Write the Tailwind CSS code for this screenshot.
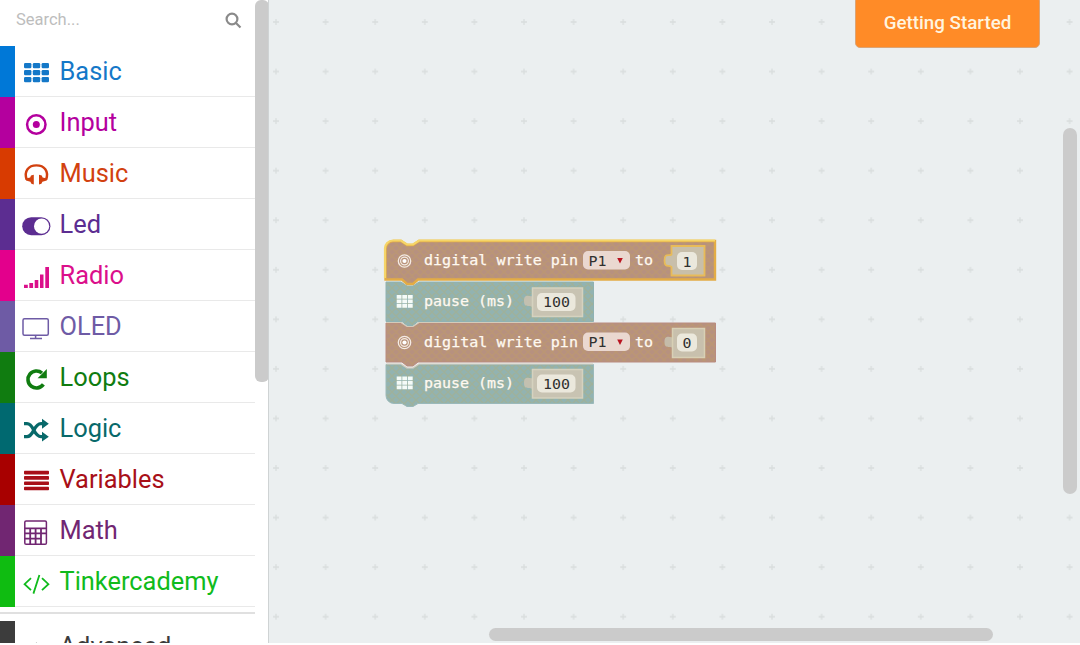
<!DOCTYPE html>
<html lang="en">
<head>
<meta charset="utf-8">
<title>Block editor</title>
<script src="https://cdn.jsdelivr.net/npm/@tailwindcss/browser@4"></script>
</head>
<body class="h-[645px] w-[1080px] overflow-hidden bg-white font-['Roboto',sans-serif]">
<div class="flex h-[643px] w-full overflow-hidden">
  <aside class="relative h-full w-[269px] shrink-0 overflow-hidden border-r border-[#cfd3d4] bg-white">
    <div class="flex h-[46px] w-[255px] items-start justify-between pt-[10px] pr-[13px] pl-4">
      <span class="text-[16.5px] leading-[19px] text-[#bdbdbd]">Search...</span>
      <svg class="mt-[2px] h-[17px] w-[17px]" viewBox="0 0 17 17" fill="none" stroke="#8a8a8a" stroke-width="2.2"><circle cx="7" cy="7" r="5.4"/><path d="M11 11l4.5 4.5"/></svg>
    </div>
    <nav class="flex w-[255px] flex-col text-[25.4px] leading-[50px]">
      <div class="flex h-[51px] text-[#1478c8]"><div class="w-[15px] bg-[#0078d7]"></div><div class="flex flex-1 border-b border-[#e9e9e9]"><svg class="mt-[1px] h-[50px] w-[44.5px] shrink-0" viewBox="0 0 44.5 50" fill="currentColor"><g><rect x="9" y="16" width="7.4" height="5.3" rx="1.3"/><rect x="17.8" y="16" width="7.4" height="5.3" rx="1.3"/><rect x="26.6" y="16" width="7.4" height="5.3" rx="1.3"/><rect x="9" y="23" width="7.4" height="5.3" rx="1.3"/><rect x="17.8" y="23" width="7.4" height="5.3" rx="1.3"/><rect x="26.6" y="23" width="7.4" height="5.3" rx="1.3"/><rect x="9" y="30" width="7.4" height="5.3" rx="1.3"/><rect x="17.8" y="30" width="7.4" height="5.3" rx="1.3"/><rect x="26.6" y="30" width="7.4" height="5.3" rx="1.3"/></g></svg><span>Basic</span></div></div>
      <div class="flex h-[51px] text-[#b4009e]"><div class="w-[15px] bg-[#b4009e]"></div><div class="flex flex-1 border-b border-[#e9e9e9]"><svg class="mt-[1px] h-[50px] w-[44.5px] shrink-0" viewBox="0 0 44.5 50"><circle cx="21.3" cy="26.5" r="9.2" fill="none" stroke="currentColor" stroke-width="2.5"/><circle cx="21.3" cy="26.5" r="3.5" fill="currentColor"/></svg><span>Input</span></div></div>
      <div class="flex h-[51px] text-[#d2410f]"><div class="w-[15px] bg-[#d83b01]"></div><div class="flex flex-1 border-b border-[#e9e9e9]"><svg class="mt-[1px] h-[50px] w-[44.5px] shrink-0" viewBox="0 0 44.500 50"><path d="M11.600 30.500C8.800 22 13.500 16.400 21.400 16.400S34 22 31.200 30.500" fill="none" stroke="currentColor" stroke-width="2.4"/><path d="M18.800 25.800V35.400L16.400 34.800 15.400 32.800 11 31.600 10.800 29.400 15.200 28.600 16 26.400ZM24 25.800V35.400L26.400 34.800 27.400 32.800 31.800 31.600 32 29.400 27.600 28.600 26.800 26.400Z" fill="currentColor"/></svg><span>Music</span></div></div>
      <div class="flex h-[51px] text-[#5c2d91]"><div class="w-[15px] bg-[#5c2d91]"></div><div class="flex flex-1 border-b border-[#e9e9e9]"><svg class="mt-[1px] h-[50px] w-[44.5px] shrink-0" viewBox="0 0 44.5 50"><rect x="7.2" y="17.2" width="28.2" height="18" rx="9" fill="currentColor"/><circle cx="26.6" cy="26.2" r="7.6" fill="white"/></svg><span>Led</span></div></div>
      <div class="flex h-[51px] text-[#db0f8b]"><div class="w-[15px] bg-[#e3008c]"></div><div class="flex flex-1 border-b border-[#e9e9e9]"><svg class="mt-[1px] h-[50px] w-[44.5px] shrink-0" viewBox="0 0 44.5 50" fill="currentColor"><path d="M9 33.7h3.8v3.3H9zM14.3 32h3.8v5h-3.8zM19.7 29h3.6v8h-3.6zM25 23.6h3.5V37H25zM30.3 16H34v21h-3.7z"/></svg><span>Radio</span></div></div>
      <div class="flex h-[51px] text-[#6e5ba5]"><div class="w-[15px] bg-[#6e5ba5]"></div><div class="flex flex-1 border-b border-[#e9e9e9]"><svg class="h-[50px] w-[44.5px] shrink-0" viewBox="0 0 44.5 50" fill="none" stroke="currentColor" stroke-width="1.5"><rect x="8" y="17.7" width="25.3" height="16.6" rx="1.5"/><path d="M20.6 34.3V38M15 37.6h12"/></svg><span>OLED</span></div></div>
      <div class="flex h-[51px] text-[#107c10]"><div class="w-[15px] bg-[#107c10]"></div><div class="flex flex-1 border-b border-[#e9e9e9]"><svg class="h-[50px] w-[44.5px] shrink-0" viewBox="0 0 44.5 50"><path d="M28.4 32.4A8.5 8.5 0 1 1 27 21" fill="none" stroke="currentColor" stroke-width="3.6"/><path d="M31.8 17V26.200H22.600Z" fill="currentColor"/></svg><span>Loops</span></div></div>
      <div class="flex h-[51px] text-[#08696a]"><div class="w-[15px] bg-[#006970]"></div><div class="flex flex-1 border-b border-[#e9e9e9]"><svg class="h-[50px] w-[44.5px] shrink-0" viewBox="0 0 44.5 50"><path d="M9 20.700h3c7 0 6.500 13 14 13h2M9 33.700h3c7 0 6.500-13 14-13h2" fill="none" stroke="currentColor" stroke-width="3.300"/><path d="M27 15.800l6.800 4.900-6.800 5zM27 28.700l6.800 5-6.800 4.800z" fill="currentColor"/></svg><span>Logic</span></div></div>
      <div class="flex h-[51px] text-[#a80f18]"><div class="w-[15px] bg-[#a80000]"></div><div class="flex flex-1 border-b border-[#e9e9e9]"><svg class="mt-[1px] h-[50px] w-[44.5px] shrink-0" viewBox="0 0 44.5 50" fill="currentColor"><rect x="9" y="15.8" width="25" height="3.6" rx=".8"/><rect x="9" y="21.1" width="25" height="3.6" rx=".8"/><rect x="9" y="26.4" width="25" height="3.6" rx=".8"/><rect x="9" y="31.7" width="25" height="3.6" rx=".8"/></svg><span>Variables</span></div></div>
      <div class="flex h-[51px] text-[#712672]"><div class="w-[15px] bg-[#712672]"></div><div class="flex flex-1 border-b border-[#e9e9e9]"><svg class="mt-[1px] h-[50px] w-[44.5px] shrink-0" viewBox="0 0 44.5 50" fill="none" stroke="currentColor" stroke-width="1.5"><rect x="9.8" y="15" width="21.6" height="23.2" rx="1.3"/><path d="M9.8 22.4h21.6M9.8 27.4h21.6M9.8 32.6h16.2M15.2 22.4v15.8M20.6 22.4v15.8M26 22.4v15.8" stroke-width="1.8"/></svg><span>Math</span></div></div>
      <div class="flex h-[51px] text-[#10bb1c]"><div class="w-[15px] bg-[#0fbc11]"></div><div class="flex flex-1 border-b border-[#e9e9e9]"><svg class="mt-[1px] h-[50px] w-[44.5px] shrink-0" viewBox="0 0 44.5 50" fill="none" stroke="currentColor" stroke-width="1.8"><path d="M16 21.2l-6.4 6 6.4 6M27 21.2l6.4 6-6.4 6M24.4 18l-6 18.6"/></svg><span>Tinkercademy</span></div></div>
      <div class="h-[7px] border-b-2 border-[#e0e0e0]"></div>
      <div class="mt-[7px] flex h-[51px] text-[#3c3c3c]"><div class="w-[15px] bg-[#3c3c3c]"></div><svg class="mt-[1px] h-[50px] w-[44.5px] shrink-0" viewBox="0 0 44.5 50" fill="none" stroke="currentColor" stroke-width="2.4"><path d="M14 29.500l7.300-7.300 7.300 7.300"/></svg><span>Advanced</span></div>
    </nav>
    <div class="absolute top-0 left-[255px] h-[382px] w-[14px] rounded-[6px] bg-[#cbcbcb]"></div>
  </aside>
  <main class="relative h-full flex-1 overflow-hidden bg-[#ebeff0]">
    <svg class="absolute inset-0 h-[643px] w-[811px]" viewBox="269 0 811 643" font-family="'DejaVu Sans Mono',monospace" font-size="14">
      <defs>
        <pattern id="grid" x="251.2" y="-2.8" width="49.6" height="49.56" patternUnits="userSpaceOnUse"><path d="M21.8 24.8h6M24.8 21.8v6" stroke="#d9dddd" stroke-width="1.3"/></pattern>
        <pattern id="weave" width="8" height="8" patternUnits="userSpaceOnUse"><path d="M-2 2l4-4M0 8l8-8M6 10l4-4M-2 6l4 4M0 0l8 8M6-2l4 4" stroke="#c9a94c" stroke-opacity=".22" stroke-width="1.5"/></pattern>
        <g id="target" fill="none" stroke="#f4ebe4"><circle r="6.2" stroke-width="1.3"/><circle r="3.9" stroke-width="1.2"/><circle r="2.100" fill="#fff" stroke="none"/></g>
        <g id="cells" fill="#f5fbf8"><path d="M0 0h4.8v3.7H0zM5.6 0h4.8v3.7H5.6zM11.2 0H16v3.7h-4.8zM0 4.5h4.8v3.7H0zM5.6 4.5h4.8v3.7H5.6zM11.2 4.5H16v3.7h-4.8zM0 9h4.8v3.7H0zM5.6 9h4.8v3.7H5.6zM11.2 9H16v3.7h-4.8z"/></g>
        <path id="last" d="M386 364.500H401l6 4h6l6-4H593.500V403.500H418l-5 3h-6l-5-3H394a8 8 0 0 1-8-8Z"/>
        <path id="third" d="M386 323H401l6 4h6l6-4H715.500V362H418l-5 4h-6l-5-4H386Z"/>
        <path id="second" d="M386 282H401l6 4h6l6-4H593.500V321.500H418l-5 4h-6l-5-4H386Z"/>
        <path id="first" d="M385.500 249a8 8 0 0 1 8-8H401l6 4h6l6-4H715V279.500H418l-5 4.500h-6l-5-4.500H385.500Z"/>
      </defs>
      <rect x="269" width="811" height="643" fill="url(#grid)"/>
      <use href="#last" fill="#92b3b1"/><use href="#last" fill="url(#weave)" stroke="#9ab9ba"/>
      <use href="#third" fill="#b7917f"/><use href="#third" fill="url(#weave)" stroke="#b98b80"/>
      <use href="#second" fill="#92b3b1"/><use href="#second" fill="url(#weave)" stroke="#8fb2b2"/>
      <path d="M386.500 322.500H401l6 4h6l6-4H593M386.500 364H401l6 4h6l6-4H593" fill="none" stroke="#d4cbb9" stroke-width="1.2"/>
      <use href="#first" fill="#b7917f"/><use href="#first" fill="url(#weave)" stroke="#e3ac45" stroke-width="2.400"/>
      <path d="M385 278V249a8 8 0 0 1 8-8.500H401l6 4h6l6-4H715" fill="none" stroke="#f5d569" stroke-width="2.200"/>

      <use href="#target" x="404.500" y="261"/><use href="#target" x="404.500" y="342.500"/>
      <use href="#cells" x="396.700" y="295"/><use href="#cells" x="396.700" y="376.500"/>
      <g fill="#fff9f0" stroke="#fff9f0" stroke-width=".25">
        <text x="424" y="265" textLength="154" lengthAdjust="spacingAndGlyphs">digital write pin</text><text x="635" y="265" textLength="18" lengthAdjust="spacingAndGlyphs">to</text>
        <text x="424" y="306" textLength="90" lengthAdjust="spacingAndGlyphs">pause (ms)</text>
        <text x="424" y="347" textLength="154" lengthAdjust="spacingAndGlyphs">digital write pin</text><text x="635" y="347" textLength="18" lengthAdjust="spacingAndGlyphs">to</text>
        <text x="424" y="388" textLength="90" lengthAdjust="spacingAndGlyphs">pause (ms)</text>
      </g>
      <g fill="#ead8d0"><rect x="583" y="251" width="47" height="18.500" rx="5"/><rect x="583" y="332.500" width="47" height="18.500" rx="5"/></g>
      <path d="M617.200 258h5.600l-2.800 5.500zM617.200 339.500h5.600l-2.800 5.500z" fill="#b91420"/>

      <path d="M671.500 246H704.500V275.500H671.500V267c-2-3-7 2-7-6.500s5-4 7-6Z" fill="#c8bfaa" stroke="#e8bb58" stroke-width="1.800"/>
      <path d="M672.500 328.500H704.500V357.500H672.500V348c-2-3-8 2-8-6s6-4 8-5Z" fill="#c5bca9"/><path d="M672.500 328.500H704.500V357.500H672.500Z" fill="#c8c0ad" stroke="#d8d0b5" stroke-width="1.500"/>
      <path d="M532 288H582.500V316.500H532V307c-2-3-8 2-8-6s6-4 8-5ZM532 369.500H582.500V398H532V389c-2-3-8 2-8-6s6-4 8-5Z" fill="#c3c0b0"/>
      <path d="M532.500 288H582.500V316.500H532.500ZM532.500 369.500H582.500V398H532.500Z" fill="#c8c3b2" stroke="#d5d2bf" stroke-width="1.500"/>
      <g fill="#ebe8dc"><rect x="677" y="252" width="20" height="18" rx="5"/><rect x="677" y="333.500" width="20" height="18" rx="5"/><rect x="537" y="293" width="38.500" height="18" rx="5"/><rect x="537" y="374.500" width="38.500" height="18" rx="5"/></g>
      <g fill="#30302f"><text x="588.500" y="265.500" textLength="18" lengthAdjust="spacingAndGlyphs">P1</text><text x="588.500" y="347" textLength="18" lengthAdjust="spacingAndGlyphs">P1</text><text x="682.500" y="266.500" textLength="9" lengthAdjust="spacingAndGlyphs">1</text><text x="682.500" y="348" textLength="9" lengthAdjust="spacingAndGlyphs">0</text><text x="543" y="307" textLength="27" lengthAdjust="spacingAndGlyphs">100</text><text x="543" y="388.500" textLength="27" lengthAdjust="spacingAndGlyphs">100</text></g>
    </svg>
    <button class="absolute top-[-4px] left-[586px] h-[52px] w-[185px] rounded-[5px] border border-[#dba476] bg-[#ff8b27] pt-[3px] text-[18.8px] font-medium text-[#fff4df]">Getting Started</button>
    <div class="absolute top-[128px] right-[3px] h-[366px] w-[14px] rounded-full bg-[#cbcbcb]"></div>
    <div class="absolute top-[628px] left-[220px] h-[13px] w-[504px] rounded-full bg-[#cbcbcb]"></div>
  </main>
</div>
</body>
</html>
